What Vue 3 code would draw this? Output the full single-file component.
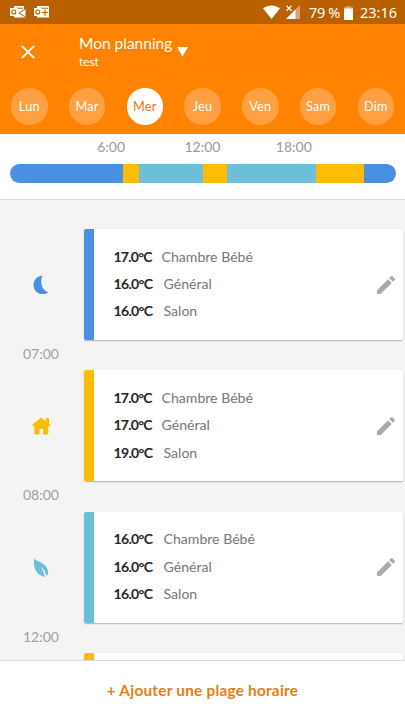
<script setup>
import { ref } from 'vue'

const days = ['Lun', 'Mar', 'Mer', 'Jeu', 'Ven', 'Sam', 'Dim']
const selected = ref('Mer')
const hours = ['6:00', '12:00', '18:00']

const segments = [
  { mode: 'night', size: 112.5 },
  { mode: 'home', size: 16.5 },
  { mode: 'eco', size: 64 },
  { mode: 'home', size: 24 },
  { mode: 'eco', size: 88.5 },
  { mode: 'home', size: 48 },
  { mode: 'night', size: 32 },
]

const slots = [
  {
    mode: 'night',
    end: '07:00',
    rooms: [['17.0°C', 'Chambre Bébé'], ['16.0°C', 'Général'], ['16.0°C', 'Salon']],
  },
  {
    mode: 'home',
    end: '08:00',
    rooms: [['17.0°C', 'Chambre Bébé'], ['17.0°C', 'Général'], ['19.0°C', 'Salon']],
  },
  {
    mode: 'eco',
    end: '12:00',
    rooms: [['16.0°C', 'Chambre Bébé'], ['16.0°C', 'Général'], ['16.0°C', 'Salon']],
  },
  { mode: 'home', end: '', rooms: [] },
]
</script>

<template>
  <div class="screen">
    <div class="status">
      <svg class="mail" width="17" height="14" viewBox="0 0 17 14">
        <path d="M4 1H14V4H15.5V12.5H4Z" fill="#fff" />
        <path d="M15.5 4L9 8L15.5 12M6 3.2H13" fill="none" stroke="#b96000" stroke-width="1" />
        <rect y="3" width="7.5" height="8" fill="#fff" />
        <circle cx="3.8" cy="7" r="2" fill="none" stroke="#b96000" stroke-width="1.1" />
      </svg>
      <svg class="mail" width="16" height="14" viewBox="0 0 16 14">
        <path d="M3 1H15V12.5H3Z" fill="#fff" />
        <path d="M5 3.2H14M8 7.5H14M11 4.5V11" fill="none" stroke="#b96000" stroke-width="1.1" />
        <rect y="3" width="7.5" height="8" fill="#fff" />
        <circle cx="3.8" cy="7" r="2" fill="none" stroke="#b96000" stroke-width="1.1" />
      </svg>
      <span class="grow"></span>
      <svg class="wifi" width="17" height="14" viewBox="0 0 17 14">
        <path d="M0 3.3C5-.6 12-.6 17 3.3L8.5 14Z" fill="#fff" />
      </svg>
      <svg class="signal" width="14" height="14" viewBox="0 0 14 14">
        <path d="M0 14L14 0V14Z" fill="#dca269" />
        <path d="M0 14L9.5 4.5V14Z" fill="#fff" />
        <path d="M.5 .8L5.5 5.8M5.5 .8L.5 5.8" stroke="#fff" stroke-width="1.3" />
      </svg>
      <span class="percent">79 %</span>
      <svg class="battery" width="9" height="14" viewBox="0 0 9 14">
        <path d="M2.5 0H6.5V1.3H9V4H0V1.3H2.5Z" fill="#dca269" />
        <path d="M0 2.5H9V14H0Z" fill="#fff" />
      </svg>
      <span class="clock">23:16</span>
    </div>

    <header>
      <div class="bar">
        <svg class="close" width="14" height="14" viewBox="0 0 14 14">
          <path d="M.8 .8L13.2 13.2M13.2 .8L.8 13.2" stroke="#fff" stroke-width="1.8" />
        </svg>
        <div class="titles">
          <div class="title">Mon planning</div>
          <div class="subtitle">test</div>
        </div>
        <svg class="caret" width="11" height="10" viewBox="0 0 11 10">
          <path d="M0 0H11L5.5 9.5Z" fill="#fff" />
        </svg>
      </div>
      <div class="days">
        <button
          v-for="day in days"
          :key="day"
          :class="['day', { active: day === selected }]"
          @click="selected = day"
        >{{ day }}</button>
      </div>
    </header>

    <section class="timeline">
      <div class="hours">
        <span v-for="hour in hours" :key="hour">{{ hour }}</span>
      </div>
      <div class="track">
        <i v-for="(s, i) in segments" :key="i" :class="s.mode" :style="{ flexGrow: s.size }"></i>
      </div>
    </section>

    <main>
      <article v-for="(slot, i) in slots" :key="i" class="slot">
        <div class="side">
          <div class="icon">
            <svg v-if="slot.mode === 'night'" width="16" height="20" viewBox="0 0 16 20">
              <path d="M9.5 .5C6.7 6.2 8.6 15.9 15.5 17.2C8.7 21.7 .5 17.3 .5 10.2C.5 5 4.3 1.1 9.5 .5Z" fill="#4a90e2" />
            </svg>
            <svg v-else-if="slot.mode === 'home'" width="19" height="18" viewBox="0 0 19 18">
              <path d="M0 8.1L9.3 .4L14 4.2V1H17V6.7L18.7 8.1L17.5 9.4L16.3 8.6V16.7Q16.3 17.5 15.5 17.5H11.2V11.8H7.6V17.5H3.2Q2.4 17.5 2.4 16.7V8.5L1.2 9.4Z" fill="#ffbc06" />
            </svg>
            <svg v-else width="16" height="20" viewBox="0 0 16 20">
              <path d="M.8 .6C4 3.6 9.6 4.2 12.8 8.2C15.2 11.2 15.6 14.2 15 16.2L13.6 17.8C12.6 14.4 10.6 11 7.8 8.8C9.8 12 11.2 15.2 11.8 19C7.4 18.2 3.2 14.8 1.8 10.6C.6 7 1.2 3.8 .8 .6Z" fill="#6dbfd9" />
            </svg>
          </div>
          <div class="end">{{ slot.end }}</div>
        </div>
        <div class="card">
          <div :class="['stripe', slot.mode]"></div>
          <ul>
            <li v-for="room in slot.rooms" :key="room[1]">
              <b :class="{ narrow: room[0].startsWith('17') }">{{ room[0] }}</b>
              <span>{{ room[1] }}</span>
            </li>
          </ul>
          <svg class="pencil" width="18" height="18" viewBox="3 3 18 18">
            <path d="M3 17.25V21h3.75L17.81 9.94l-3.75-3.75L3 17.25zM20.71 7.04c.39-.39.39-1.02 0-1.41l-2.34-2.34c-.39-.39-1.02-.39-1.41 0l-1.83 1.83 3.75 3.75 1.83-1.83z" fill="#aaa" />
          </svg>
        </div>
      </article>
    </main>

    <footer>+ Ajouter une plage horaire</footer>
  </div>
</template>

<style>
body {
  margin: 0;
}
</style>

<style scoped>
.screen {
  width: 405px;
  height: 720px;
  display: flex;
  flex-direction: column;
  overflow: hidden;
  background: #fff;
  font-family: Lato, "Open Sans", sans-serif;
}
svg {
  display: block;
  flex: none;
}
.status {
  height: 24px;
  flex: none;
  box-sizing: border-box;
  display: flex;
  align-items: center;
  padding: 0 8px 0 10px;
  background: #b96000;
  color: #fff;
  font: 14.5px/25px "Noto Sans", sans-serif;
}
.mail {
  margin-right: 7px;
}
.grow {
  flex: 1;
}
.wifi {
  margin-right: 6px;
}
.signal {
  margin-right: 9px;
}
.percent {
  width: 31px;
  white-space: nowrap;
  letter-spacing: -0.4px;
}
.battery {
  margin: 1px 7px 0 4px;
}
.clock {
  width: 37px;
  white-space: nowrap;
}
header {
  height: 110px;
  flex: none;
  background: #ff8200;
  color: #fff;
}
.bar {
  height: 64px;
  box-sizing: border-box;
  display: flex;
  align-items: flex-start;
  padding: 10px 0 0 21px;
}
.close {
  margin-top: 11px;
}
.titles {
  width: 94px;
  margin-left: 44px;
  white-space: nowrap;
}
.title {
  font-size: 15.5px;
  line-height: 19px;
}
.subtitle {
  font-size: 12px;
  line-height: 17px;
  letter-spacing: -0.1px;
}
.caret {
  margin: 12.5px 0 0 4px;
}
.days {
  display: flex;
  justify-content: space-between;
  padding: 0 11px;
}
.day {
  width: 36.5px;
  height: 36.5px;
  padding: 0;
  border: 0;
  border-radius: 50%;
  background: #ffa042;
  color: #fff;
  font: 12.7px/36px Lato, sans-serif;
  letter-spacing: 0.15px;
}
.day.active {
  background: #fff;
  color: #e87a0c;
}
.timeline {
  height: 66px;
  flex: none;
  box-sizing: border-box;
  border-bottom: 1px solid #dedede;
}
.hours {
  display: grid;
  grid-template-columns: repeat(3, 91.3px);
  justify-content: center;
  height: 29.5px;
  color: #999;
  font-size: 14px;
  line-height: 25.5px;
  text-align: center;
}
.track {
  display: flex;
  height: 19.5px;
  margin: 0 9.5px 0 10px;
  border-radius: 10px;
  overflow: hidden;
}
.track i {
  flex: 0 0 0;
}
.night {
  background: #4a90e2;
}
.home {
  background: #ffbc06;
}
.eco {
  background: #6dbfd9;
}
main {
  flex: 1;
  min-height: 0;
  overflow: hidden;
  padding-top: 29px;
  background: #f4f4f4;
}
.slot {
  display: flex;
  height: 141.4px;
}
.side {
  width: 84px;
  flex: none;
}
.icon {
  width: 82px;
  height: 112px;
  display: flex;
  align-items: center;
  justify-content: center;
}
.end {
  width: 82px;
  color: #a0a0a0;
  font-size: 14px;
  line-height: 26.6px;
  text-align: center;
}
.card {
  width: 318.5px;
  height: 111px;
  display: flex;
  align-items: center;
  background: #fff;
  border-radius: 2px;
  box-shadow: 0 1px 1.5px rgba(0, 0, 0, 0.28);
}
.stripe {
  width: 10px;
  height: 100%;
  border-radius: 2px 0 0 2px;
}
ul {
  flex: 1;
  margin: 0;
  padding: 0 0 1.6px 19.5px;
  list-style: none;
}
li {
  display: flex;
  height: 27.4px;
  line-height: 27.4px;
  font-size: 14.1px;
  white-space: nowrap;
  color: #777;
}
b {
  width: 50px;
  color: #262626;
  letter-spacing: -0.7px;
}
b.narrow {
  width: 48px;
  letter-spacing: -0.8px;
}
.pencil {
  margin-right: 7.5px;
}
footer {
  height: 60px;
  flex: none;
  box-sizing: border-box;
  border-top: 1px solid #dedede;
  color: #e67e12;
  font-size: 15.3px;
  font-weight: 700;
  letter-spacing: 0.26px;
  line-height: 58px;
  text-align: center;
}
</style>
